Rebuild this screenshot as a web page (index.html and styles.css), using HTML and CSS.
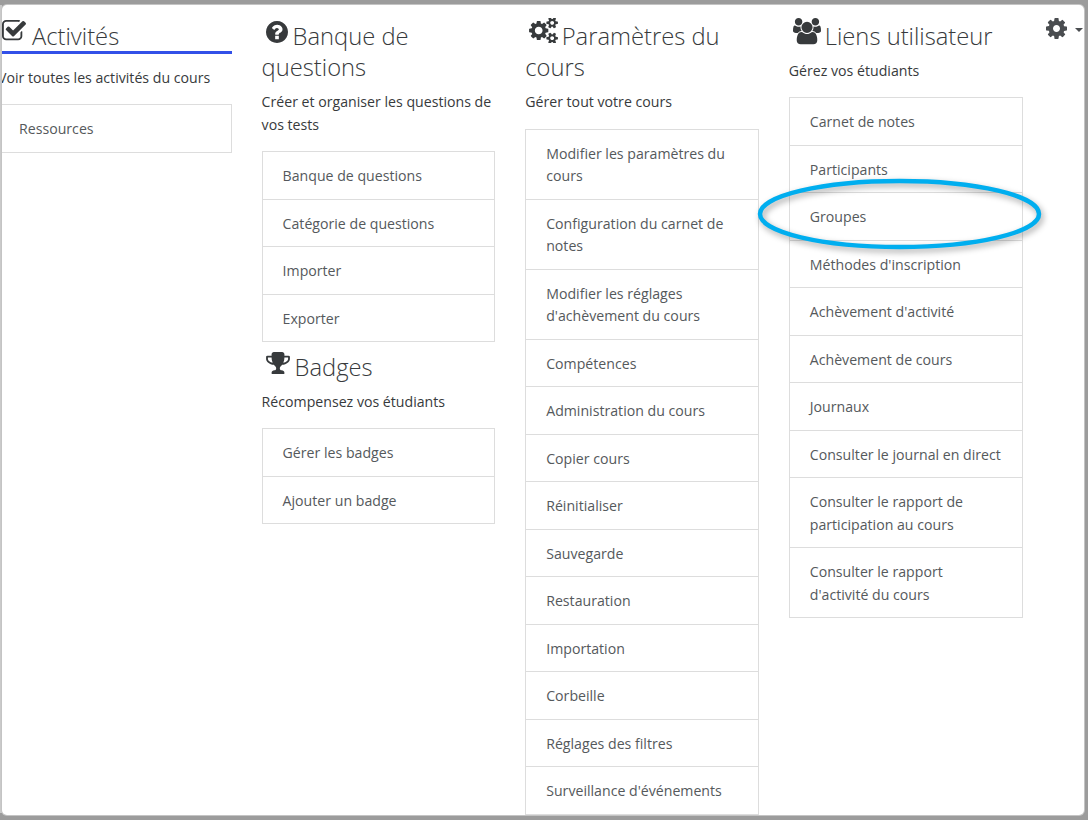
FILE: index.html
```html
<!DOCTYPE html>
<html lang="fr">
<head>
<meta charset="utf-8">
<title>Administration du cours</title>
<link rel="stylesheet" href="styles.css">
</head>
<body>
<main class="panel">
  <div class="columns">
    <section class="col">
      <h3 class="title title-active"><svg class="ico ico-check" viewBox="64 128 1664 1408"><path d="M1472 930v318q0 119-84.5 203.5t-203.5 84.5h-832q-119 0-203.5-84.5t-84.5-203.5v-832q0-119 84.5-203.5t203.5-84.5h832q63 0 117 25 15 7 18 23 3 17-9 29l-49 49q-10 10-23 10-3 0-9-2-23-6-45-6h-832q-66 0-113 47t-47 113v832q0 66 47 113t113 47h832q66 0 113-47t47-113v-254q0-13 9-22l64-64q10-10 23-10 6 0 12 3 20 8 20 29zm231-489l-814 814q-24 24-57 24t-57-24l-430-430q-24-24-24-57t24-57l110-110q24-24 57-24t57 24l263 263 647-647q24-24 57-24t57 24l110 110q24 24 24 57t-24 57z"/></svg>Activités</h3>
      <p class="desc">Voir toutes les activités du cours</p>
      <ul class="list">
        <li>Ressources</li>
      </ul>
    </section>
    <section class="col">
      <h3 class="title"><svg class="ico ico-q" viewBox="128 128 1536 1536"><path d="M1024 1376v-192q0-14-9-23t-23-9h-192q-14 0-23 9t-9 23v192q0 14 9 23t23 9h192q14 0 23-9t9-23zm256-672q0-88-55.5-163t-138.5-116-170-41q-243 0-371 213-15 24 8 42l132 100q7 6 19 6 16 0 25-12 53-68 86-92 34-24 86-24 48 0 85.5 26t37.5 59q0 38-20 61t-68 45q-63 28-115.5 86.5t-52.5 125.5v36q0 14 9 23t23 9h192q14 0 23-9t9-23q0-19 21.5-49.5t54.5-49.5q32-18 49-28.5t46-35 44.5-48 28-60.5 12.5-81zm384 192q0 209-103 385.5t-279.5 279.5-385.5 103-385.5-103-279.5-279.5-103-385.5 103-385.5 279.5-279.5 385.5-103 385.5 103 279.5 279.5 103 385.5z"/></svg>Banque de questions</h3>
      <p class="desc">Créer et organiser les questions de vos tests</p>
      <ul class="list">
        <li>Banque de questions</li>
        <li>Catégorie de questions</li>
        <li>Importer</li>
        <li>Exporter</li>
      </ul>
      <h3 class="title title-next"><svg class="ico ico-trophy" viewBox="64 128 1664 1536"><path d="M522 883q-74-162-74-371h-256v96q0 78 94.5 162t235.5 113zm1078-275v-96h-256q0 209-74 371 141-29 235.5-113t94.5-162zm128-128v128q0 71-41.5 143t-112 130-173 97.5-215.5 44.5q-42 54-95 95-38 34-52.5 72.5t-14.5 89.5q0 54 30.5 91t97.5 37q75 0 133.5 45.5t58.5 114.5v64q0 14-9 23t-23 9h-832q-14 0-23-9t-9-23v-64q0-69 58.5-114.5t133.5-45.5q67 0 97.5-37t30.5-91q0-51-14.5-89.5t-52.5-72.5q-53-41-95-95-113-5-215.5-44.5t-173-97.5-112-130-41.5-143v-128q0-40 28-68t68-28h288v-96q0-66 47-113t113-47h576q66 0 113 47t47 113v96h288q40 0 68 28t28 68z"/></svg>Badges</h3>
      <p class="desc">Récompensez vos étudiants</p>
      <ul class="list">
        <li>Gérer les badges</li>
        <li>Ajouter un badge</li>
      </ul>
    </section>
    <section class="col">
      <h3 class="title"><svg class="ico ico-cogs" viewBox="0 64 1920 1664"><path d="M896 896q0-106-75-181t-181-75-181 75-75 181 75 181 181 75 181-75 75-181zm768 512q0-52-38-90t-90-38-90 38-38 90q0 53 37.5 90.5t90.5 37.5 90.5-37.5 37.5-90.5zm0-1024q0-52-38-90t-90-38-90 38-38 90q0 53 37.5 90.5t90.5 37.5 90.5-37.5 37.5-90.5zm-384 421v185q0 10-7 19.5t-16 10.5l-155 24q-11 35-32 76 34 48 90 115 7 11 7 20 0 12-7 19-23 30-82.5 89.5t-78.5 59.5q-11 0-21-7l-115-90q-37 19-77 31-11 108-23 155-7 24-30 24h-186q-11 0-20-7.5t-10-17.5l-23-153q-34-10-75-31l-118 89q-7 7-20 7-11 0-21-8-144-133-144-160 0-9 7-19 10-14 41-53t47-61q-23-44-35-82l-152-24q-10-1-17-9.5t-7-19.5v-185q0-10 7-19.5t16-10.5l155-24q11-35 32-76-34-48-90-115-7-11-7-20 0-12 7-20 22-30 82-89t79-59q11 0 21 7l115 90q34-18 77-32 11-108 23-154 7-24 30-24h186q11 0 20 7.5t10 17.5l23 153q34 10 75 31l118-89q8-7 20-7 11 0 21 8 144 133 144 160 0 8-7 19-12 16-42 54t-45 60q23 48 34 82l152 23q10 2 17 10.5t7 19.5zm640 533v140q0 16-149 31-12 27-30 52 51 113 51 138 0 4-4 7-122 71-124 71-8 0-46-47t-52-68q-20 2-30 2t-30-2q-14 21-52 68t-46 47q-2 0-124-71-4-3-4-7 0-25 51-138-18-25-30-52-149-15-149-31v-140q0-16 149-31 13-29 30-52-51-113-51-138 0-4 4-7 4-2 35-20t59-34 30-16q8 0 46 46.5t52 67.5q20-2 30-2t30 2q51-71 92-112l6-2q4 0 124 70 4 3 4 7 0 25-51 138 17 23 30 52 149 15 149 31zm0-1024v140q0 16-149 31-12 27-30 52 51 113 51 138 0 4-4 7-122 71-124 71-8 0-46-47t-52-68q-20 2-30 2t-30-2q-14 21-52 68t-46 47q-2 0-124-71-4-3-4-7 0-25 51-138-18-25-30-52-149-15-149-31v-140q0-16 149-31 13-29 30-52-51-113-51-138 0-4 4-7 4-2 35-20t59-34 30-16q8 0 46 46.5t52 67.5q20-2 30-2t30 2q51-71 92-112l6-2q4 0 124 70 4 3 4 7 0 25-51 138 17 23 30 52 149 15 149 31z"/></svg>Paramètres du cours</h3>
      <p class="desc">Gérer tout votre cours</p>
      <ul class="list">
        <li>Modifier les paramètres du cours</li>
        <li>Configuration du carnet de notes</li>
        <li>Modifier les réglages d'achèvement du cours</li>
        <li>Compétences</li>
        <li>Administration du cours</li>
        <li>Copier cours</li>
        <li>Réinitialiser</li>
        <li>Sauvegarde</li>
        <li>Restauration</li>
        <li>Importation</li>
        <li>Corbeille</li>
        <li>Réglages des filtres</li>
        <li>Surveillance d'événements</li>
      </ul>
    </section>
    <section class="col">
      <h3 class="title"><svg class="ico ico-users" viewBox="0 0 1920 1792"><path d="M593 896q-162 5-265 128h-134q-82 0-138-40.5t-56-118.5q0-353 124-353 6 0 43.5 21t97.5 42.5 119 21.5q67 0 133-23-5 37-5 66 0 139 81 256zm1071 637q0 120-73 189.5t-194 69.5h-874q-121 0-194-69.5t-73-189.5q0-53 3.5-103.5t14-109 26.5-108.5 43-97.5 62-81 85.5-53.5 111.5-20q10 0 43 21.5t73 48 107 48 135 21.5 135-21.5 107-48 73-48 43-21.5q61 0 111.5 20t85.5 53.5 62 81 43 97.5 26.5 108.5 14 109 3.5 103.5zm-1024-1277q0 106-75 181t-181 75-181-75-75-181 75-181 181-75 181 75 75 181zm704 384q0 159-112.5 271.5t-271.5 112.5-271.5-112.5-112.5-271.5 112.5-271.5 271.5-112.5 271.5 112.5 112.5 271.5zm576 225q0 78-56 118.5t-138 40.5h-134q-103-123-265-128 81-117 81-256 0-29-5-66 66 23 133 23 59 0 119-21.5t97.5-42.5 43.5-21q124 0 124 353zm-128-609q0 106-75 181t-181 75-181-75-75-181 75-181 181-75 181 75 75 181z"/></svg>Liens utilisateur</h3>
      <p class="desc">Gérez vos étudiants</p>
      <ul class="list">
        <li>Carnet de notes</li>
        <li>Participants</li>
        <li>Groupes</li>
        <li>Méthodes d'inscription</li>
        <li>Achèvement d'activité</li>
        <li>Achèvement de cours</li>
        <li>Journaux</li>
        <li>Consulter le journal en direct</li>
        <li>Consulter le rapport de participation au cours</li>
        <li>Consulter le rapport d'activité du cours</li>
      </ul>
    </section>
  </div>
  <div class="gear">
    <svg class="gear-ico" viewBox="128 128 1536 1536"><path d="M1152 896q0-106-75-181t-181-75-181 75-75 181 75 181 181 75 181-75 75-181zm512-109v222q0 12-8 23t-20 13l-185 28q-19 54-39 91 35 50 107 138 10 12 10 25t-9 23q-27 37-99 108t-94 71q-12 0-26-9l-138-108q-44 23-91 38-16 136-29 186-7 28-36 28h-222q-14 0-24.5-8.5t-11.5-21.5l-28-184q-49-16-90-37l-141 107q-10 9-25 9-14 0-25-11-126-114-165-168-7-10-7-23 0-12 8-23 15-21 51-66.5t54-70.5q-27-50-41-99l-183-27q-13-2-21-12.5t-8-23.5v-222q0-12 8-23t19-13l186-28q14-46 39-92-40-57-107-138-10-12-10-24 0-10 9-23 26-36 98.5-107.5t94.5-71.5q13 0 26 10l138 107q44-23 91-38 16-136 29-186 7-28 36-28h222q14 0 24.5 8.5t11.5 21.5l28 184q49 16 90 37l142-107q9-9 24-9 13 0 25 10 129 119 165 170 7 8 7 22 0 12-8 23-15 21-51 66.5t-54 70.5q26 50 41 98l183 28q13 2 21 12.5t8 23.5z"/></svg>
    <span class="caret"></span>
  </div>
  <svg class="ring" viewBox="0 0 300 90"><ellipse cx="144.5" cy="42" rx="139.5" ry="33"/></svg>
</main>
</body>
</html>
```
FILE: styles.css
```css
* { box-sizing: border-box; }
html, body { height: 100%; }
body {
  margin: 0;
  padding: 5px 4px 5px 2px;
  background: #9c9c9c linear-gradient(#cacaca, #cacaca) no-repeat 0 5px / 2px 808px;
  overflow: hidden;
  font-family: "Open Sans", "Liberation Sans", sans-serif;
  color: #373a3c;
}
.panel {
  position: relative;
  height: 810px;
  background: #fff;
  border-radius: 5px;
  overflow: hidden;
  box-shadow: 0 0 0 1px #c4c4c4;
}
.columns {
  display: flex;
  gap: 29.8px;
  margin-left: -4px;
  padding-top: 14.5px;
}
.col { width: 233.8px; flex: none; }
.title {
  margin: 0 0 7.25px;
  padding-top: 1px;
  font-size: 23.75px;
  font-weight: 300;
  line-height: 31.75px;
  color: #373a3c;
}
.title-active {
  margin-bottom: 13px;
  border-bottom: 3px solid #3250e8;
  height: 34px;
}
.title-next { margin: 8.5px 0 7.25px; }
.ico { fill: #373a3c; vertical-align: 2px; }
.ico-check { width: 24px; height: 20.3px; margin: -20.3px 6px 0 4px; vertical-align: 4px; }
.ico-q { width: 22px; height: 22px; margin: -22px 5px 0 4px; }
.ico-trophy { width: 24px; height: 22px; margin: -22px 5px 0 4px; }
.ico-cogs { width: 29px; height: 25px; margin: -25px 3.5px 0 4px; }
.ico-users { width: 28px; height: 26.2px; margin: -26.2px 4px 0 4px; vertical-align: 0; }
.desc {
  margin: 0 0 15px;
  font-size: 14.15px;
  line-height: 22.5px;
}
.list {
  list-style: none;
  margin: 0;
  padding: 0;
  border: 1px solid #ddd;
  border-bottom: 0;
}
.list li {
  padding: 13px 20px 11px;
  border-bottom: 1px solid #ddd;
  font-size: 14.15px;
  line-height: 22.5px;
  color: #55595c;
}
.gear {
  position: absolute;
  top: 12.5px;
  left: 1044px;
  display: flex;
  align-items: center;
  gap: 7.7px;
}
.gear-ico { width: 21px; height: 21px; fill: #4a4d50; }
.caret {
  margin-top: 4px;
  border-top: 4px solid #4a4d50;
  border-left: 4.5px solid transparent;
  border-right: 4.5px solid transparent;
}
.ring {
  position: absolute;
  left: 753px;
  top: 167px;
  width: 300px;
  height: 90px;
  overflow: visible;
  filter: drop-shadow(2px 3px 3px rgba(0, 0, 0, .35));
}
.ring ellipse {
  fill: none;
  stroke: #00aeef;
  stroke-width: 4.5;
}
```
